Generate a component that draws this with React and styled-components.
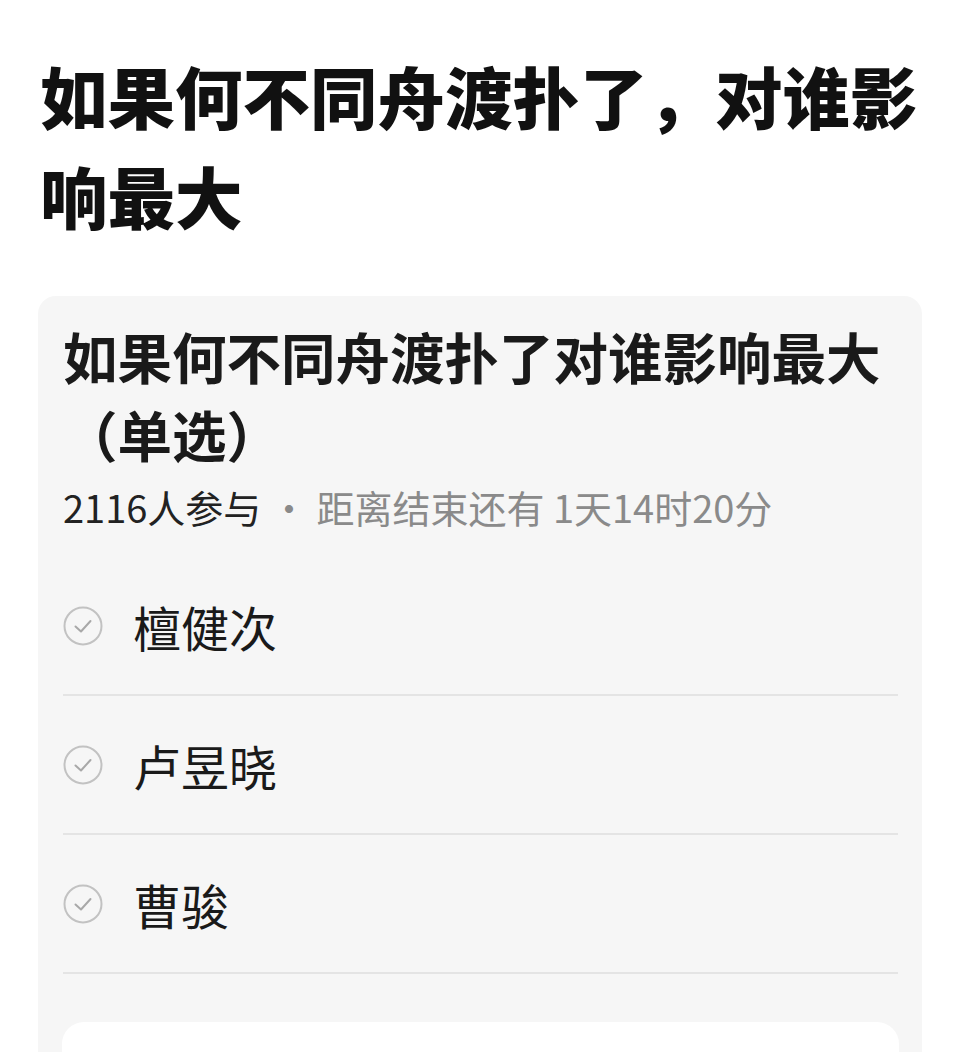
import React from 'react';
import styled, { createGlobalStyle } from 'styled-components';

const GlobalStyle = createGlobalStyle`
  html, body {
    margin: 0;
    padding: 0;
    background: #ffffff;
  }
  body {
    font-family: 'Noto Sans CJK SC', 'Noto Sans', sans-serif;
    color: #1a1a1a;
  }
`;

const options = ['檀健次', '卢昱晓', '曹骏'];

const CheckIcon = () => (
  <svg width="40" height="40" viewBox="0 0 40 40" fill="none">
    <circle cx="20" cy="20" r="18.5" stroke="#c2c2c2" strokeWidth="2" />
    <path d="M12.5 20.5 L18 25.5 L27.5 15" stroke="#a8a8a8" strokeWidth="2" strokeLinecap="round" strokeLinejoin="round" />
  </svg>
);

const App = () => {
  return (
    <Page>
      <GlobalStyle />
      <Title>如果何不同舟渡扑了，对谁影响最大</Title>
      <VoteCard>
        <VoteTitle>如果何不同舟渡扑了对谁影响最大（单选）</VoteTitle>
        <Meta>
          <strong>2116人参与</strong> · 距离结束还有 1天14时20分
        </Meta>
        <OptionList>
          {options.map((name) => (
            <Option key={name}>
              <CheckIcon />
              <OptionText>{name}</OptionText>
            </Option>
          ))}
        </OptionList>
        <Footer />
      </VoteCard>
    </Page>
  );
};

const Page = styled.div`
  padding: 45px 38px 0 38px;
  min-height: 1052px;
  box-sizing: border-box;
  overflow: hidden;
`;

const Title = styled.h1`
  margin: 0 -30px 51px 2px;
  font-size: 67.5px;
  line-height: 100px;
  font-weight: 900;
  color: #111111;
`;

const VoteCard = styled.div`
  background: #f6f6f6;
  border-radius: 18px;
  padding: 21px 24px 0 25px;
`;

const VoteTitle = styled.h2`
  margin: 0 -10px 0 0;
  font-size: 54.5px;
  line-height: 78px;
  font-weight: 700;
  color: #1a1a1a;
`;

const Meta = styled.div`
  margin-top: 9px;
  font-size: 38px;
  line-height: 50px;
  color: #8a8a8a;
  white-space: nowrap;

  strong {
    font-weight: 400;
    color: #222222;
  }
`;

const OptionList = styled.div`
  margin-top: 25px;
  display: flex;
  flex-direction: column;
`;

const Option = styled.div`
  display: flex;
  align-items: center;
  gap: 30px;
  height: 137px;
  border-bottom: 2px solid #e4e4e4;
`;

const OptionText = styled.span`
  font-size: 48px;
  color: #1a1a1a;
  line-height: 1;
`;

const Footer = styled.div`
  margin: 48px -1px 0 -1px;
  height: 60px;
  background: #ffffff;
  border-radius: 22px 22px 0 0;
`;

export default App;
